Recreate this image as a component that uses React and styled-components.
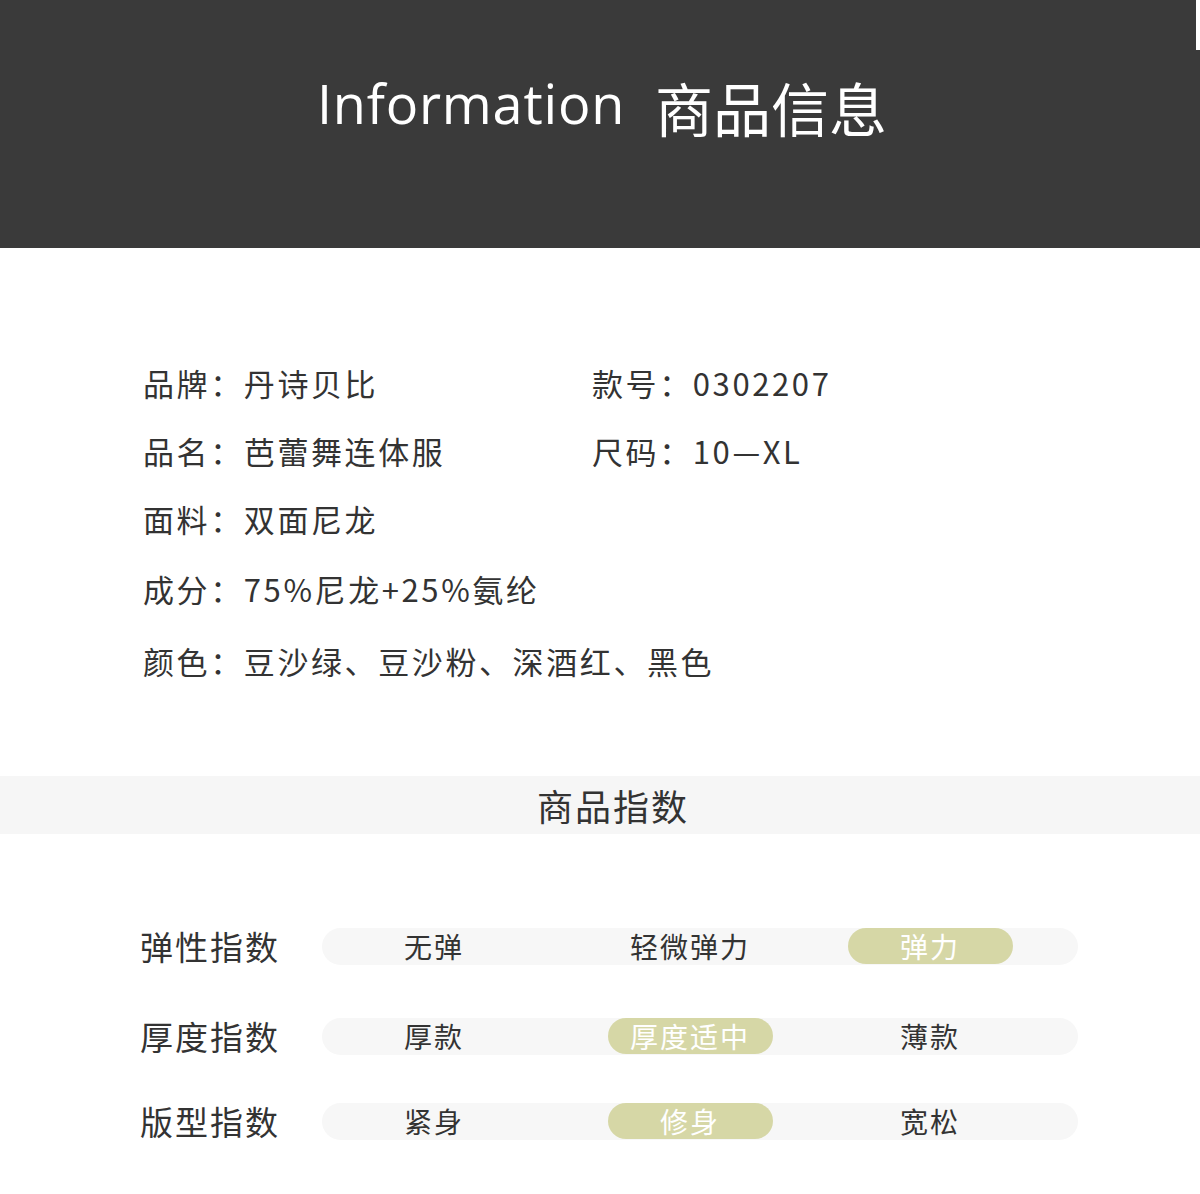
import React from "react";
import styled, { createGlobalStyle } from "styled-components";

const G = createGlobalStyle`
  body{margin:0;background:#fff;font-family:"Noto Sans CJK SC","Noto Sans",sans-serif;}
`;
const Page = styled.div`width:1200px;height:1194px;overflow:hidden;position:relative;`;
const Header = styled.header`
  height:248px;background:#3a3a3a;display:flex;justify-content:center;align-items:flex-start;
  padding-top:66px;box-sizing:border-box;color:#fff;gap:30px;position:relative;padding-left:4px;
`;
const Mark = styled.div`position:absolute;right:0;top:0;width:4px;height:50px;background:#fff;`;
const En = styled.span`font-family:"Open Sans","Noto Sans",sans-serif;font-size:54px;line-height:74px;letter-spacing:0.8px;`;
const Cn = styled.span`font-size:58px;line-height:82px;`;
const Info = styled.div`
  display:grid;grid-template-columns:449px auto;padding:100px 0 0 143px;row-gap:0;
  color:#333;font-size:31px;letter-spacing:2.6px;
`;
const Cell = styled.div`height:${p=>p.h}px;display:flex;align-items:center;grid-column:${p=>p.full?"1 / span 2":"auto"};`;
const Band = styled.div`
  margin-top:80px;height:58px;background:#f6f6f6;display:flex;justify-content:center;align-items:center;
  font-size:36px;color:#333;letter-spacing:2px;padding-left:26px;
`;
const Rows = styled.div`padding:92px 0 0 140px;display:flex;flex-direction:column;gap:${p=>p.gap}px;`;
const Row = styled.div`display:flex;align-items:center;height:${p=>p.h}px;`;
const Label = styled.div`width:182px;font-size:33px;color:#333;letter-spacing:2px;`;
const Track = styled.div`
  width:756px;height:37px;border-radius:19px;background:#f7f7f7;display:grid;
  grid-template-columns:224px 288px 192px;align-items:center;justify-items:center;
`;
const Opt = styled.div`
  width:165px;height:36px;border-radius:18px;display:flex;justify-content:center;align-items:center;
  font-size:28px;letter-spacing:2px;background:${p=>p.on?"#d6d7a6":"transparent"};color:${p=>p.on?"#fff":"#333"};
`;

const rows = [
  ["弹性指数", ["无弹","轻微弹力","弹力"], 2],
  ["厚度指数", ["厚款","厚度适中","薄款"], 1],
  ["版型指数", ["紧身","修身","宽松"], 1],
];

export default function App(){
  return <Page><G/>
    <Header><Mark/><En>Information</En><Cn>商品信息</Cn></Header>
    <Info>
      <Cell h={68}>品牌：丹诗贝比</Cell><Cell h={68}>款号：0302207</Cell>
      <Cell h={68}>品名：芭蕾舞连体服</Cell><Cell h={68}>尺码：10—XL</Cell>
      <Cell h={68} full>面料：双面尼龙</Cell>
      <Cell h={72} full>成分：75%尼龙+25%氨纶</Cell>
      <Cell h={72} full>颜色：豆沙绿、豆沙粉、深酒红、黑色</Cell>
    </Info>
    <Band>商品指数</Band>
    <Rows gap={50}>
      {rows.map(([l,opts,on],i)=>(
        <Row key={l} h={40} style={i===2?{marginTop:-5}:null}>
          <Label>{l}</Label>
          <Track>{opts.map((o,j)=><Opt key={o} on={j===on}>{o}</Opt>)}</Track>
        </Row>
      ))}
    </Rows>
  </Page>;
}
